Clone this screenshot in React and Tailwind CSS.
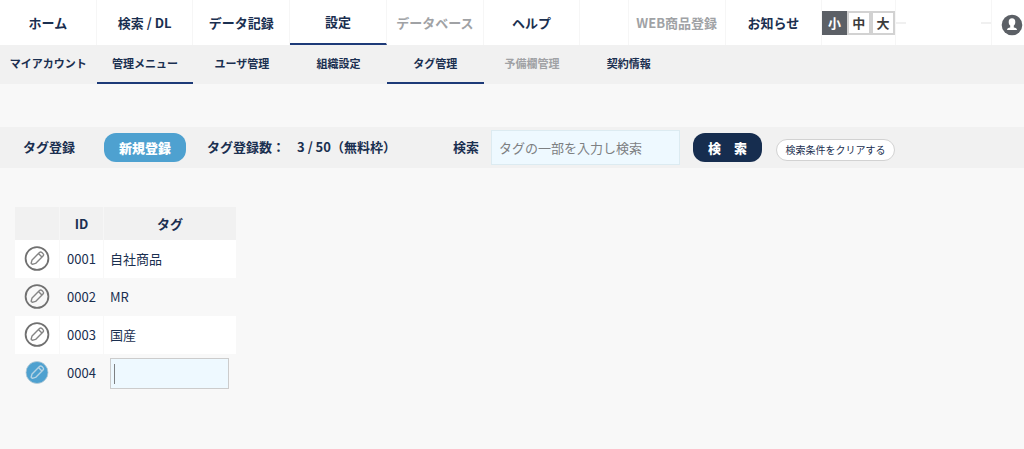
import React, { useState } from 'react';
import clsx from 'clsx';

const mainMenu = [
  { label: 'ホーム' },
  { label: '検索 / DL' },
  { label: 'データ記録' },
  { label: '設定', active: true },
  { label: 'データベース', disabled: true },
  { label: 'ヘルプ' },
  { label: '' },
  { label: 'WEB商品登録', disabled: true },
  { label: 'お知らせ' },
];

const subMenu = [
  { label: 'マイアカウント' },
  { label: '管理メニュー', active: true },
  { label: 'ユーザ管理' },
  { label: '組織設定' },
  { label: 'タグ管理', active: true },
  { label: '予備欄管理', disabled: true },
  { label: '契約情報' },
];

const tags = [
  { id: '0001', name: '自社商品' },
  { id: '0002', name: 'MR' },
  { id: '0003', name: '国産' },
];

function PencilIcon({ editing }) {
  return (
    <svg viewBox="0 0 26 26" className="block size-[26px]" aria-hidden="true">
      <circle
        cx="13"
        cy="12.5"
        r={editing ? 11 : 11.4}
        fill={editing ? '#4ea1d0' : 'none'}
        stroke={editing ? '#b9cbd6' : '#707070'}
        strokeWidth={editing ? 0.8 : 1.8}
      />
      <g
        fill="none"
        stroke={editing ? '#b5d3e4' : '#858585'}
        strokeWidth="1.4"
        strokeLinejoin="round"
        transform="rotate(45 13 12.5)"
      >
        <path d="M10.5 6.500 Q10.500 4.800 12.200 4.800 H13.800 Q15.500 4.800 15.500 6.500 V17 L13.800 20 H12.200 L10.500 17 Z" />
        <path d="M10.5 8 H15.500" />
      </g>
    </svg>
  );
}

function UserIcon() {
  return (
    <svg viewBox="0 0 22 22" className="block size-[22px]" aria-hidden="true">
      <circle cx="11" cy="11" r="10.3" fill="#5c6066" />
      <path
        fill="#fff"
        d="M11 4.300c-2.100 0-3.300 1.400-3.300 3.600 0 1.600.6 2.900 1.500 3.700v1.800c-1.800.3-3.200.8-3.200 2.700h10c0-1.900-1.400-2.400-3.200-2.700v-1.800c.9-.8 1.500-2.100 1.500-3.700 0-2.200-1.200-3.600-3.300-3.600z"
      />
    </svg>
  );
}

function MenuLink({ item, className }) {
  return (
    <a
      href="#"
      aria-disabled={item.disabled}
      className={clsx(
        'flex items-center justify-center whitespace-nowrap',
        item.disabled && 'text-[#a0a2a5]',
        item.active && 'border-b-2 border-b-[#1d3a78]',
        className
      )}
    >
      {item.label}
    </a>
  );
}

export default function App() {
  const [size, setSize] = useState('小');
  const [keyword, setKeyword] = useState('');
  const [newTag, setNewTag] = useState('');

  return (
    <div className="min-h-screen bg-[#f8f8f8] font-['Noto_Sans_CJK_JP',sans-serif] text-[13px] leading-5 text-[#1a2f50]">
      <header>
        <nav className="grid h-[45px] grid-cols-[repeat(6,2fr)_1fr_2fr_2fr_73px_2fr_32px] bg-white font-bold">
          {mainMenu.map((item, i) =>
            item.label ? (
              <MenuLink
                key={i}
                item={item}
                className={clsx('border-r border-r-[#f6f6f6]', !item.active && 'pt-px')}
              />
            ) : (
              <div key={i} className="border-r border-r-[#f6f6f6]" />
            )
          )}
          <div className="flex items-center">
            {['小', '中', '大'].map((s) => (
              <button
                key={s}
                type="button"
                onClick={() => setSize(s)}
                className={clsx(
                  'h-6 flex-1 border-2 text-center leading-4',
                  s === size ? 'border-[#5c6066] bg-[#5c6066] text-white' : 'border-[#d2d2d2] bg-white text-[#3c3c3c]'
                )}
              >
                {s}
              </button>
            ))}
          </div>
          <div className="flex items-center justify-between border-x border-[#f6f6f6]">
            <span className="h-0.5 w-2.5 bg-[#f0f0f0]" />
            <span className="h-0.5 w-2.5 bg-[#f0f0f0]" />
          </div>
          <button type="button" aria-label="アカウント" className="flex items-center justify-end pt-1 pr-px">
            <UserIcon />
          </button>
        </nav>

        <nav className="grid h-[39px] grid-cols-[repeat(7,2fr)_5fr_105px] bg-[#f1f1f1] text-[11px] font-bold">
          {subMenu.map((item) => (
            <MenuLink key={item.label} item={item} className={item.active ? 'pb-0.5' : 'pb-1'} />
          ))}
        </nav>
      </header>

      <main>
        <form
          onSubmit={(e) => e.preventDefault()}
          className="mt-[43px] flex h-[41px] items-center bg-[#f1f1f1] pl-[23px] font-bold whitespace-nowrap"
        >
          <h1 className="pb-0.5">タグ登録</h1>
          <button type="button" className="ml-[29px] h-[29px] w-[82px] rounded-xl bg-[#4ea1d0] font-black text-white">
            新規登録
          </button>
          <p className="ml-[21px] w-[90px] pb-0.5">タグ登録数：</p>
          <p className="w-[156px] pb-0.5">3 / 50（無料枠）</p>
          <label htmlFor="keyword" className="pb-0.5">
            検索
          </label>
          <input
            id="keyword"
            type="text"
            value={keyword}
            onChange={(e) => setKeyword(e.target.value)}
            placeholder="タグの一部を入力し検索"
            className="ml-3 h-[35px] w-[189px] border border-[#dcebf1] bg-[#eef9ff] px-[7px] font-normal outline-none placeholder:text-[#7d8082]"
          />
          <button type="submit" className="ml-[13px] h-[29px] w-[69px] rounded-xl bg-[#162d4f] font-black text-white">
            検　索
          </button>
          <button
            type="button"
            onClick={() => setKeyword('')}
            className="mt-1 ml-[14px] h-[22px] w-[119px] rounded-full border border-[#d2d2d2] bg-white text-[10px] font-normal"
          >
            検索条件をクリアする
          </button>
        </form>

        <table className="mt-[39px] ml-[15px] w-[221px] table-fixed border-separate border-spacing-0">
          <thead>
            <tr className="h-[33px] bg-[#f1f1f1]">
              <th className="w-[45px] border-r border-[#f6f6f6]" />
              <th className="w-11 border-r border-[#f6f6f6] font-bold">ID</th>
              <th className="font-bold">タグ</th>
            </tr>
          </thead>
          <tbody>
            {tags.map((tag) => (
              <tr key={tag.id} className="h-[38px] odd:bg-white">
                <td className="border-r border-[#f8f8f8] pl-[9px]">
                  <button type="button" aria-label={tag.id + 'を編集'} className="block">
                    <PencilIcon />
                  </button>
                </td>
                <td className="border-r border-[#f8f8f8] text-center">{tag.id}</td>
                <td className="pl-1.5">{tag.name}</td>
              </tr>
            ))}
            <tr className="h-[38px]">
              <td className="border-r border-[#f8f8f8] pl-[9px]">
                <button type="button" aria-label="0004を編集" className="block">
                  <PencilIcon editing />
                </button>
              </td>
              <td className="border-r border-[#f8f8f8] text-center">0004</td>
              <td className="pl-1.5">
                <div className="relative">
                  <input
                    type="text"
                    aria-label="タグ"
                    value={newTag}
                    onChange={(e) => setNewTag(e.target.value)}
                    className="peer block h-[31px] w-[119px] border border-[#cccccc] bg-[#eef9ff] px-1 outline-none"
                  />
                  {newTag === '' && (
                    <span className="pointer-events-none absolute top-1.5 left-1 h-5 w-px bg-[#7d8082] peer-focus:hidden" />
                  )}
                </div>
              </td>
            </tr>
          </tbody>
        </table>
      </main>
    </div>
  );
}
